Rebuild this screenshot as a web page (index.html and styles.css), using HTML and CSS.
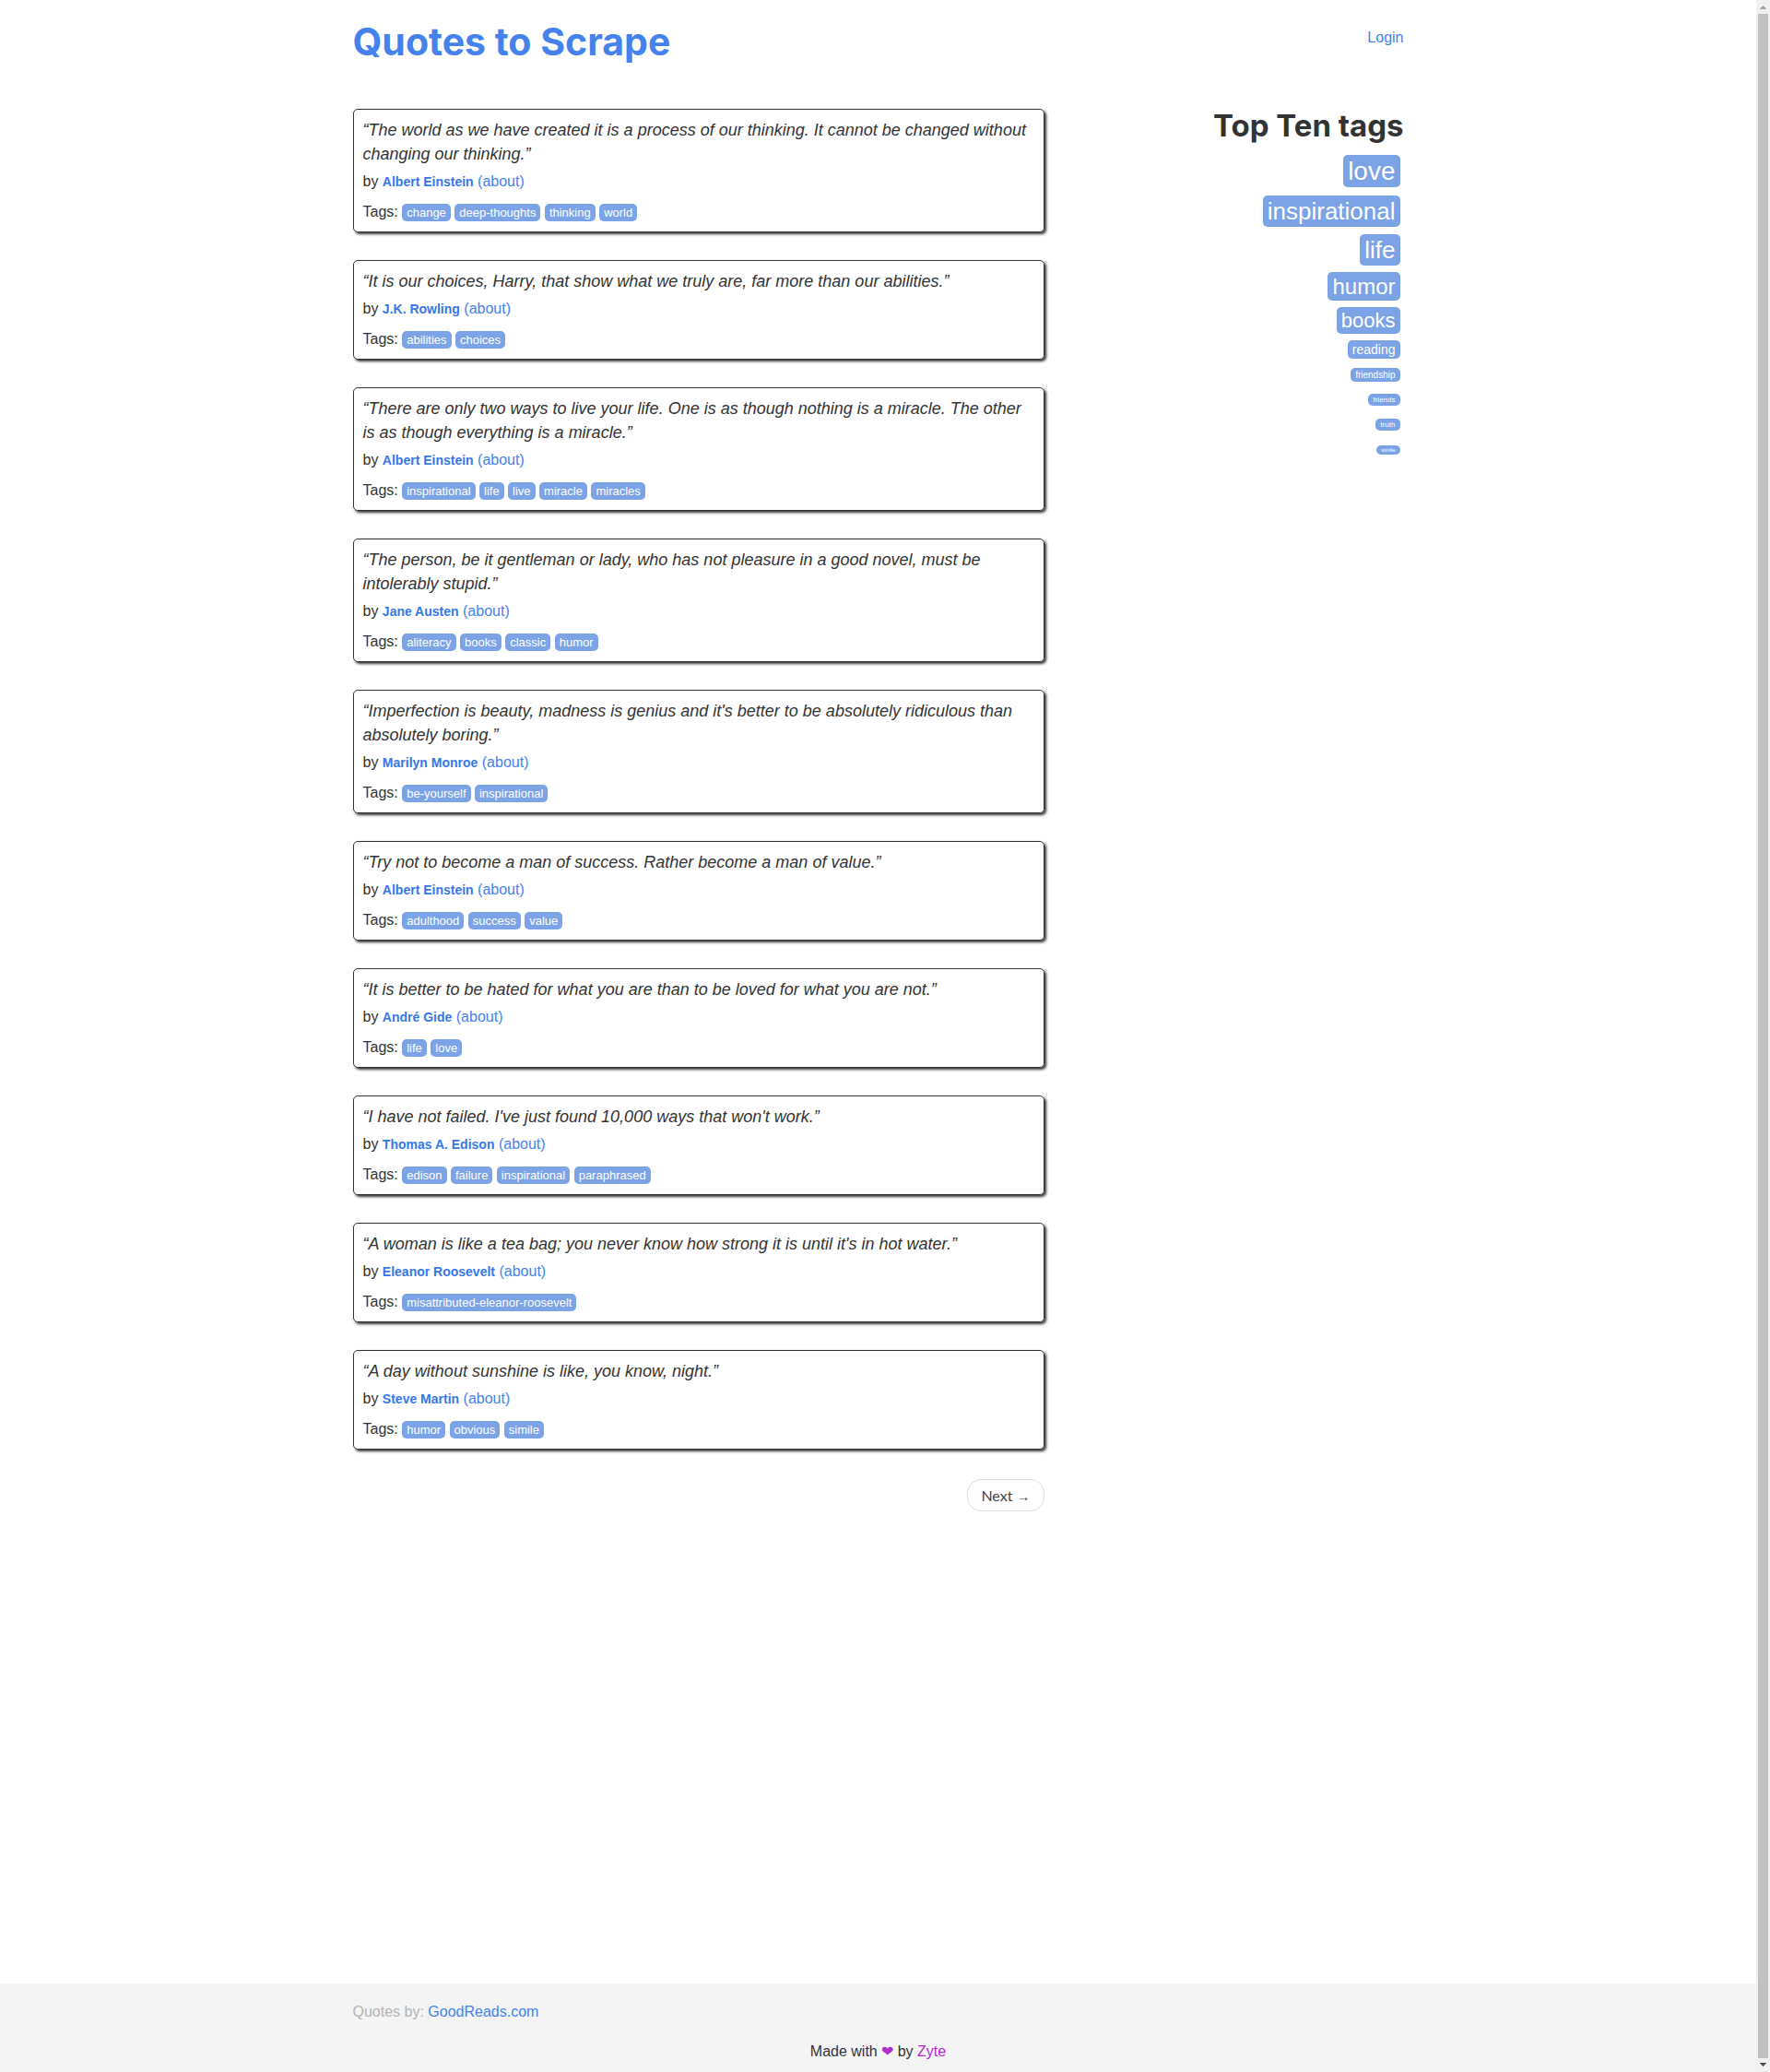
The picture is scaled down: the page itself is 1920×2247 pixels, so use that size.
FILE: index.html
```html
<!DOCTYPE html>
<html lang="en">
<head>
<meta charset="utf-8">
<meta name="viewport" content="width=device-width, initial-scale=1">
<title>Quotes to Scrape</title>
<link rel="stylesheet" href="styles.css">
</head>
<body>
<div class="page">
  <div class="container">
    <header class="header">
      <h1 class="site-title"><a href="#">Quotes to Scrape</a></h1>
      <a class="login" href="#">Login</a>
    </header>
    <div class="columns">
      <main class="quotes">
        <article class="quote">
          <p class="text">“The world as we have created it is a process of our thinking. It cannot be changed without changing our thinking.”</p>
          <p class="by">by <small class="author">Albert Einstein</small> <a href="#">(about)</a></p>
          <p class="tags">Tags: <a class="tag" href="#">change</a> <a class="tag" href="#">deep-thoughts</a> <a class="tag" href="#">thinking</a> <a class="tag" href="#">world</a></p>
        </article>
        <article class="quote">
          <p class="text">“It is our choices, Harry, that show what we truly are, far more than our abilities.”</p>
          <p class="by">by <small class="author">J.K. Rowling</small> <a href="#">(about)</a></p>
          <p class="tags">Tags: <a class="tag" href="#">abilities</a> <a class="tag" href="#">choices</a></p>
        </article>
        <article class="quote">
          <p class="text">“There are only two ways to live your life. One is as though nothing is a miracle. The other is as though everything is a miracle.”</p>
          <p class="by">by <small class="author">Albert Einstein</small> <a href="#">(about)</a></p>
          <p class="tags">Tags: <a class="tag" href="#">inspirational</a> <a class="tag" href="#">life</a> <a class="tag" href="#">live</a> <a class="tag" href="#">miracle</a> <a class="tag" href="#">miracles</a></p>
        </article>
        <article class="quote">
          <p class="text">“The person, be it gentleman or lady, who has not pleasure in a good novel, must be intolerably stupid.”</p>
          <p class="by">by <small class="author">Jane Austen</small> <a href="#">(about)</a></p>
          <p class="tags">Tags: <a class="tag" href="#">aliteracy</a> <a class="tag" href="#">books</a> <a class="tag" href="#">classic</a> <a class="tag" href="#">humor</a></p>
        </article>
        <article class="quote">
          <p class="text">“Imperfection is beauty, madness is genius and it's better to be absolutely ridiculous than absolutely boring.”</p>
          <p class="by">by <small class="author">Marilyn Monroe</small> <a href="#">(about)</a></p>
          <p class="tags">Tags: <a class="tag" href="#">be-yourself</a> <a class="tag" href="#">inspirational</a></p>
        </article>
        <article class="quote">
          <p class="text">“Try not to become a man of success. Rather become a man of value.”</p>
          <p class="by">by <small class="author">Albert Einstein</small> <a href="#">(about)</a></p>
          <p class="tags">Tags: <a class="tag" href="#">adulthood</a> <a class="tag" href="#">success</a> <a class="tag" href="#">value</a></p>
        </article>
        <article class="quote">
          <p class="text">“It is better to be hated for what you are than to be loved for what you are not.”</p>
          <p class="by">by <small class="author">André Gide</small> <a href="#">(about)</a></p>
          <p class="tags">Tags: <a class="tag" href="#">life</a> <a class="tag" href="#">love</a></p>
        </article>
        <article class="quote">
          <p class="text">“I have not failed. I've just found 10,000 ways that won't work.”</p>
          <p class="by">by <small class="author">Thomas A. Edison</small> <a href="#">(about)</a></p>
          <p class="tags">Tags: <a class="tag" href="#">edison</a> <a class="tag" href="#">failure</a> <a class="tag" href="#">inspirational</a> <a class="tag" href="#">paraphrased</a></p>
        </article>
        <article class="quote">
          <p class="text">“A woman is like a tea bag; you never know how strong it is until it's in hot water.”</p>
          <p class="by">by <small class="author">Eleanor Roosevelt</small> <a href="#">(about)</a></p>
          <p class="tags">Tags: <a class="tag" href="#">misattributed-eleanor-roosevelt</a></p>
        </article>
        <article class="quote">
          <p class="text">“A day without sunshine is like, you know, night.”</p>
          <p class="by">by <small class="author">Steve Martin</small> <a href="#">(about)</a></p>
          <p class="tags">Tags: <a class="tag" href="#">humor</a> <a class="tag" href="#">obvious</a> <a class="tag" href="#">simile</a></p>
        </article>
        <nav class="pager"><a class="next" href="#">Next <span class="arrow" aria-hidden="true">→</span></a></nav>
      </main>
      <aside class="top-tags">
        <h2>Top Ten tags</h2>
        <ul>
          <li class="size-28"><a class="tag" href="#">love</a></li>
          <li class="size-26"><a class="tag" href="#">inspirational</a></li>
          <li class="size-26"><a class="tag" href="#">life</a></li>
          <li class="size-24"><a class="tag" href="#">humor</a></li>
          <li class="size-22"><a class="tag" href="#">books</a></li>
          <li class="size-14"><a class="tag" href="#">reading</a></li>
          <li class="size-10"><a class="tag" href="#">friendship</a></li>
          <li class="size-8"><a class="tag" href="#">friends</a></li>
          <li class="size-8"><a class="tag" href="#">truth</a></li>
          <li class="size-6"><a class="tag" href="#">simile</a></li>
        </ul>
      </aside>
    </div>
  </div>
  <footer class="footer">
    <div class="container">
      <p class="source">Quotes by: <a href="#">GoodReads.com</a></p>
      <p class="made">Made with <span class="zyte">❤</span> by <a class="zyte" href="#">Zyte</a></p>
    </div>
  </footer>
</div>
<div class="scrollbar" aria-hidden="true">
  <svg width="15" height="15" viewBox="0 0 15 15" shape-rendering="crispEdges"><path fill="#a3a3a3" d="M7 6h1v1h1v1h1v1h1v1H4V9h1V8h1V7h1z"/></svg>
  <div class="thumb"></div>
  <svg width="15" height="15" viewBox="0 0 15 15" shape-rendering="crispEdges"><path fill="#505050" d="M4 5h7v1h-1v1H9v1H8v1H7V8H6V7H5V6H4z"/></svg>
</div>
</body>
</html>
```
FILE: styles.css
```css
* {
  box-sizing: border-box;
}

body {
  display: flex;
  min-height: 100vh;
  margin: 0;
  background: #fff;
  color: #333;
  font: 16px/23px "Liberation Sans", Arial, sans-serif;
}

h1, h2, p, ul {
  margin: 0;
}

a {
  color: #4582ec;
  text-decoration: none;
}

a:hover {
  text-decoration: underline;
}

.page {
  display: flex;
  flex: 1;
  flex-direction: column;
  min-width: 0;
}

.container {
  width: 100%;
  max-width: 1170px;
  margin: 0 auto;
  padding: 0 15px;
}

.header {
  display: flex;
  align-items: flex-start;
  justify-content: space-between;
  padding: 20px 0 48px;
}

.site-title {
  font: bold 41px/50px Inter, sans-serif;
}

.login {
  margin-top: 9px;
}

.columns {
  display: grid;
  grid-template-columns: 2fr 1fr;
}

.quotes {
  padding-right: 10px;
}

.quote {
  margin-bottom: 30px;
  padding: 9px 10px 10px;
  border: 1px solid #333;
  border-radius: 5px;
  box-shadow: 2px 2px 3px #333;
}

.text {
  margin-bottom: 5px;
  font-size: 18px;
  font-style: italic;
  line-height: 26px;
}

.by {
  margin-bottom: 10px;
}

.author {
  color: #3677e8;
  font-size: 14px;
  font-weight: bold;
  line-height: 1;
}

.tag {
  padding: 2px 5px;
  border-radius: 5px;
  background: #7ca3e6;
  color: #fff;
  font-size: 13px;
  line-height: 1;
}

.pager {
  display: flex;
  justify-content: flex-end;
  padding-top: 2px;
}

.next {
  padding: 5px 14px;
  border: 1px solid #ddd;
  border-radius: 15px;
  color: #444;
  font-family: Lato, sans-serif;
}

.arrow {
  font-family: "Liberation Sans", Arial, sans-serif;
  font-size: 15px;
  line-height: 1;
}

.top-tags {
  text-align: right;
}

.top-tags h2 {
  margin-bottom: 12px;
  font: bold 33px/36px Inter, sans-serif;
}

.top-tags ul {
  padding: 0 4px 0 0;
  list-style: none;
}

.top-tags li {
  margin-bottom: 4px;
}

.top-tags .tag {
  font-size: inherit;
}

.size-28 { font-size: 28px; line-height: 40px; }
.size-26 { font-size: 26px; line-height: 38px; }
.size-24 { font-size: 24px; line-height: 34px; }
.size-22 { font-size: 22px; line-height: 32px; }
.size-14 { font-size: 14px; }
.size-10 { font-size: 10px; }
.size-8 { font-size: 8px; }
.size-6 { font-size: 6px; line-height: 24px; }

.footer {
  margin-top: auto;
  padding: 19px 0 11px;
  background: #f4f4f4;
}

.source {
  margin-bottom: 20px;
  color: #b3b3b3;
}

.made {
  text-align: center;
}

.zyte {
  color: #b02ccf;
}

.scrollbar {
  display: flex;
  flex-direction: column;
  width: 15px;
  background: #f1f1f1;
}

.thumb {
  flex: 1;
  margin: 0 2px;
  background: #c1c1c1;
}
```
